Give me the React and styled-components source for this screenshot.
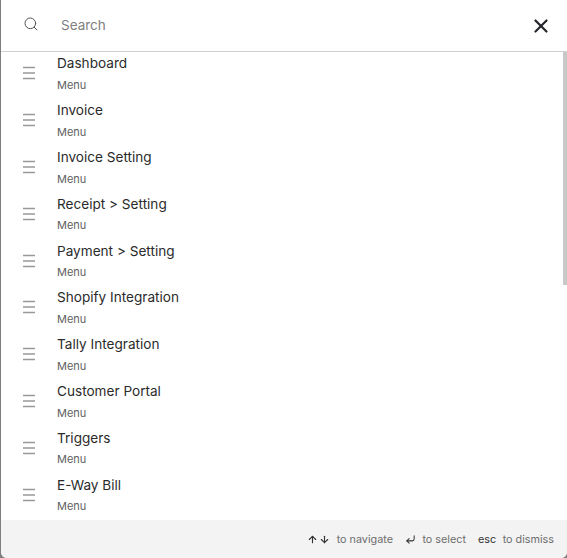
import React from 'react';
import styled, { createGlobalStyle } from 'styled-components';
import { Search, X, ArrowUp, ArrowDown, CornerDownLeft } from 'lucide-react';

const GlobalStyle = createGlobalStyle`
  html, body {
    margin: 0;
    padding: 0;
    height: 100%;
    background: #7f7f7f;
    font-family: Inter, "Liberation Sans", sans-serif;
  }
  #root {
    height: 100%;
  }
`;

const Palette = styled.div`
  height: 558px;
  margin-left: 1px;
  background: #fff;
  border-radius: 0 0 6px 6px;
  display: flex;
  flex-direction: column;
  overflow: hidden;
`;

const SearchBar = styled.div`
  height: 51px;
  flex: none;
  display: flex;
  align-items: center;
  border-bottom: 1px solid #d0d0d0;
  padding: 0 15px 0 22px;
  box-sizing: content-box;
`;

const SearchIcon = styled(Search)`
  width: 16px;
  height: 16px;
  color: #555;
  flex: none;
  margin-top: -3px;
`;

const SearchInput = styled.input`
  flex: 1;
  min-width: 0;
  margin: -1px 0 0 22px;
  border: none;
  outline: none;
  background: none;
  padding: 0;
  font: 400 13.5px Inter, "Liberation Sans", sans-serif;
  color: #222;

  &::placeholder {
    color: #808080;
    opacity: 1;
  }
`;

const CloseButton = styled.button`
  border: none;
  background: none;
  padding: 0;
  display: flex;
  color: #22252a;
  cursor: pointer;
`;

const Results = styled.div`
  position: relative;
  flex: 1;
  min-height: 0;
  overflow: hidden;
`;

const ScrollThumb = styled.div`
  position: absolute;
  top: 0;
  right: 0;
  width: 4px;
  height: 233px;
  background: #c8c8c8;
`;

const ResultList = styled.ul`
  list-style: none;
  margin: 0;
  padding: 0.4px 0 0;
`;

const Row = styled.li`
  height: 46.8px;
  display: flex;
  align-items: center;
  padding-left: 22px;
`;

const MenuGlyph = styled.svg`
  width: 12px;
  height: 14px;
  flex: none;
  margin-bottom: 4.6px;
  color: #999;
`;

const RowText = styled.div`
  margin-left: 22px;
  display: flex;
  flex-direction: column;
  align-self: flex-start;
`;

const RowTitle = styled.span`
  font-size: 13.6px;
  line-height: 22px;
  color: #2b2b2b;
`;

const RowKind = styled.span`
  margin-top: 0.6px;
  font-size: 11px;
  line-height: 20px;
  color: #5f5f5f;
`;

const Footer = styled.footer`
  height: 38px;
  flex: none;
  background: #f3f3f3;
  display: flex;
  align-items: center;
  justify-content: flex-end;
  gap: 12px;
  padding-right: 13px;
  font-size: 10.8px;
  color: #6e6e6e;
`;

const Hint = styled.span`
  display: flex;
  align-items: center;
  gap: 6.5px;
`;

const Keys = styled.span`
  display: flex;
  align-items: center;
  gap: 1px;
  color: #333;
`;

const items = [
  'Dashboard',
  'Invoice',
  'Invoice Setting',
  'Receipt > Setting',
  'Payment > Setting',
  'Shopify Integration',
  'Tally Integration',
  'Customer Portal',
  'Triggers',
  'E-Way Bill',
];

const App = () => (
  <>
    <GlobalStyle />
    <Palette>
      <SearchBar>
        <SearchIcon strokeWidth={1.5} />
        <SearchInput placeholder="Search" />
        <CloseButton aria-label="Close">
          <X size={22} strokeWidth={2.4} />
        </CloseButton>
      </SearchBar>
      <Results>
        <ResultList>
          {items.map((name) => (
            <Row key={name}>
              <MenuGlyph viewBox="0 0 12 14" aria-hidden="true">
                <path d="M0 1.5h12M0 7h12M0 12.5h12" stroke="currentColor" strokeWidth="1.5" />
              </MenuGlyph>
              <RowText>
                <RowTitle>{name}</RowTitle>
                <RowKind>Menu</RowKind>
              </RowText>
            </Row>
          ))}
        </ResultList>
        <ScrollThumb />
      </Results>
      <Footer>
        <Hint>
          <Keys>
            <ArrowUp size={11} strokeWidth={2.4} />
            <ArrowDown size={11} strokeWidth={2.4} />
          </Keys>
          to navigate
        </Hint>
        <Hint>
          <Keys>
            <CornerDownLeft size={11} strokeWidth={2.2} />
          </Keys>
          to select
        </Hint>
        <Hint>
          <Keys>esc</Keys>
          to dismiss
        </Hint>
      </Footer>
    </Palette>
  </>
);

export default App;
